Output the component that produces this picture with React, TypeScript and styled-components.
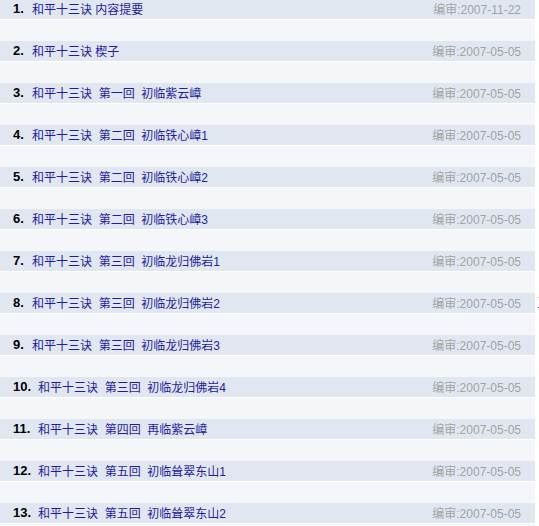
import React from "react";
import styled, { createGlobalStyle } from "styled-components";

const Global = createGlobalStyle`
  html, body { margin: 0; padding: 0; background: #ffffff; }
  body { font-family: "Liberation Sans", "Noto Sans CJK SC", sans-serif; font-size: 12px; }
`;

const Page = styled.div`
  display: flex;
  width: 539px;
  height: 526px;
  overflow: hidden;
`;

const List = styled.ul`
  list-style: none;
  margin: -1px 0 0 0;
  padding: 0;
  width: 535px;
  flex: none;
`;

const Item = styled.li`
  display: flex;
  flex-direction: column;
`;

const Band = styled.div`
  height: 20px;
  display: flex;
  align-items: center;
  background: #e1e7f1;
  padding: 0 14px 2px 13px;
  box-sizing: border-box;
`;

const Gap = styled.div`
  height: 21px;
  background: #f4f6fa;
  border-top: 1px solid #ffffff;
`;

const Num = styled.b<{ $wide: boolean }>`
  font-family: "Liberation Sans", Arial, sans-serif;
  font-weight: bold;
  font-size: 13px;
  color: #000000;
  width: ${(p) => (p.$wide ? "25px" : "19px")};
  flex: none;
`;

const Title = styled.a`
  font-family: "Liberation Sans", "Noto Sans CJK SC", sans-serif;
  font-size: 12px;
  color: #1c1ca4;
  text-decoration: none;
  white-space: pre;
  flex: 1;
`;

const DateText = styled.span`
  font-family: "Liberation Sans", "Noto Sans CJK SC", sans-serif;
  font-size: 12px;
  color: #a3a3a3;
  white-space: nowrap;
`;

const Side = styled.div`
  flex: 1;
  overflow: hidden;
  padding: 294px 0 0 2px;
`;

const RedMark = styled.span`
  display: block;
  color: #d42020;
  font-family: "Noto Sans CJK SC", sans-serif;
  font-size: 13px;
  line-height: 16px;
`;

const items: [string, string][] = [
  ["和平十三诀 内容提要", "2007-11-22"],
  ["和平十三诀 楔子", "2007-05-05"],
  ["和平十三诀  第一回  初临紫云嶂", "2007-05-05"],
  ["和平十三诀  第二回  初临铁心嶂1", "2007-05-05"],
  ["和平十三诀  第二回  初临铁心嶂2", "2007-05-05"],
  ["和平十三诀  第二回  初临铁心嶂3", "2007-05-05"],
  ["和平十三诀  第三回  初临龙归佛岩1", "2007-05-05"],
  ["和平十三诀  第三回  初临龙归佛岩2", "2007-05-05"],
  ["和平十三诀  第三回  初临龙归佛岩3", "2007-05-05"],
  ["和平十三诀  第三回  初临龙归佛岩4", "2007-05-05"],
  ["和平十三诀  第四回  再临紫云嶂", "2007-05-05"],
  ["和平十三诀  第五回  初临耸翠东山1", "2007-05-05"],
  ["和平十三诀  第五回  初临耸翠东山2", "2007-05-05"],
];

export default function App() {
  return (
    <>
      <Global />
      <Page>
        <List>
          {items.map(([title, date], i) => (
            <Item key={i}>
              <Band>
                <Num $wide={i + 1 >= 10}>{i + 1}.</Num>
                <Title href="#">{title}</Title>
                <DateText>编审:{date}</DateText>
              </Band>
              <Gap />
            </Item>
          ))}
        </List>
        <Side>
          <RedMark>三</RedMark>
        </Side>
      </Page>
    </>
  );
}
